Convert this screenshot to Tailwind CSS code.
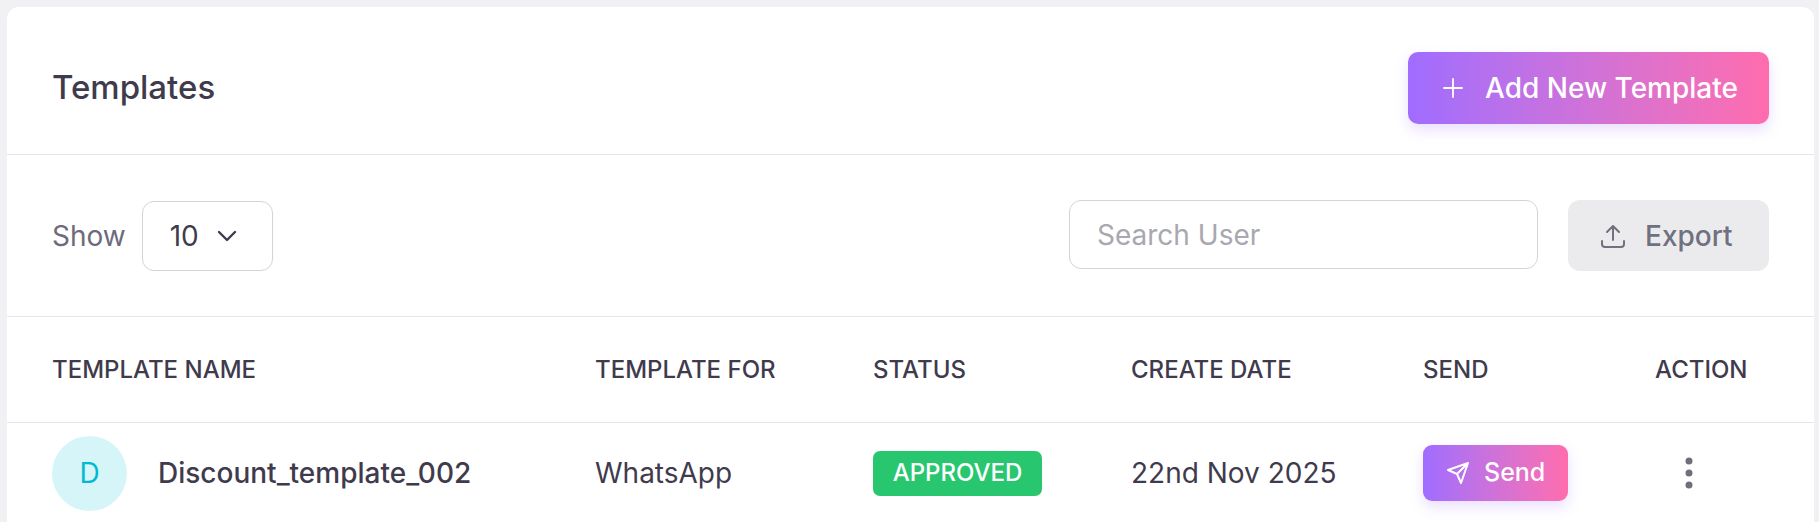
<!DOCTYPE html>
<html lang="en">
<head>
<meta charset="UTF-8">
<title>Templates</title>
<script src="https://cdn.jsdelivr.net/npm/@tailwindcss/browser@4"></script>
</head>
<body class="bg-[#f1f1f3] h-[522px] overflow-hidden font-['Inter',sans-serif] text-[#3f3b4d]">
<div class="ml-[7px] mr-[5px] mt-[7px] bg-white rounded-t-xl h-[515px] overflow-hidden">
  <div class="h-[148px] pt-[15px] pl-[45px] pr-[45px] flex items-center justify-between border-b border-[#e6e6e9]">
    <h2 class="text-[33px] font-medium">Templates</h2>
    <button class="h-[72px] w-[361px] pl-[35px] rounded-[10px] bg-gradient-to-r from-[#a06cff] to-[#ff6cad] text-white text-[28px] font-medium flex items-center gap-[22px] shadow-[0_6px_14px_rgba(160,108,255,0.22)]">
      <svg class="w-5 h-5" viewBox="0 0 20 20" fill="none" stroke="currentColor" stroke-width="1.8" stroke-linecap="round"><path d="M10 1v18M1 10h18"/></svg>
      Add New Template
    </button>
  </div>
  <div class="h-[162px] pl-[45px] pr-[45px] flex items-center justify-between border-b border-[#e6e6e9]">
    <div class="flex items-center gap-4">
      <span class="text-[28px] text-[#6d6b7b]">Show</span>
      <div class="w-[131px] h-[70px] pl-[27px] border border-[#d4d4d8] rounded-xl flex items-center gap-[18px] text-[28px]">10
        <svg class="w-5 h-3" viewBox="0 0 20 12" fill="none" stroke="currentColor" stroke-width="2.4" stroke-linecap="round" stroke-linejoin="round"><path d="M2 2l8 8 8-8"/></svg>
      </div>
    </div>
    <div class="flex items-start gap-[30px]">
      <div class="w-[469px] h-[69px] pl-[27px] border border-[#d4d4d8] rounded-xl flex items-center text-[28px] text-[#a8a8b1]">Search User</div>
      <button class="w-[201px] h-[71px] pl-[33px] rounded-xl bg-[#ebebed] text-[#6f7080] text-[28px] font-medium flex items-center gap-[20px]">
        <svg class="w-6 h-6" viewBox="0 0 24 24" fill="none" stroke="currentColor" stroke-width="2" stroke-linecap="round" stroke-linejoin="round"><path d="M12 16V2M6 8l6-6 6 6M1 17v3a3 3 0 0 0 3 3h16a3 3 0 0 0 3-3v-3"/></svg>
        Export
      </button>
    </div>
  </div>
  <div class="h-[106px] pl-[45px] flex items-center border-b border-[#e6e6e9] text-[24px] font-medium uppercase">
    <div class="w-[543px]">Template Name</div>
    <div class="w-[278px]">Template For</div>
    <div class="w-[258px]">Status</div>
    <div class="w-[292px]">Create Date</div>
    <div class="w-[232px]">Send</div>
    <div>Action</div>
  </div>
  <div class="h-[100px] pl-[45px] flex items-center text-[28px]">
    <div class="w-[543px] flex items-center gap-[31px] font-medium">
      <span class="w-[75px] h-[75px] rounded-full bg-[#d6f5f8] text-[#00bad1] flex items-center justify-center font-normal">D</span>
      Discount_template_002
    </div>
    <div class="w-[278px]">WhatsApp</div>
    <div class="w-[258px]"><span class="inline-flex items-center justify-center w-[169px] h-[45px] bg-[#28c76f] text-white rounded-[7px] text-[24px] font-medium">APPROVED</span></div>
    <div class="w-[292px]">22nd Nov 2025</div>
    <div class="w-[232px]">
      <button class="w-[145px] h-[56px] pl-[23px] rounded-[9px] bg-gradient-to-r from-[#a06cff] to-[#ff6cad] text-white text-[25px] font-medium flex items-center gap-[14px] shadow-[0_6px_14px_rgba(160,108,255,0.22)]">
        <svg class="w-[24px] h-[24px]" viewBox="0 0 24 24" fill="none" stroke="currentColor" stroke-width="2" stroke-linecap="round" stroke-linejoin="round"><path d="M22 2L11 13M22 2l-7 20-4-9-9-4z"/></svg>
        Send
      </button>
    </div>
    <div class="pl-[30px]">
      <svg class="w-2 h-[32px] text-[#6f6f7b]" viewBox="0 0 8 32" fill="currentColor"><circle cx="4" cy="4" r="3.5"/><circle cx="4" cy="16" r="3.5"/><circle cx="4" cy="28" r="3.5"/></svg>
    </div>
  </div>
</div>
</body>
</html>
